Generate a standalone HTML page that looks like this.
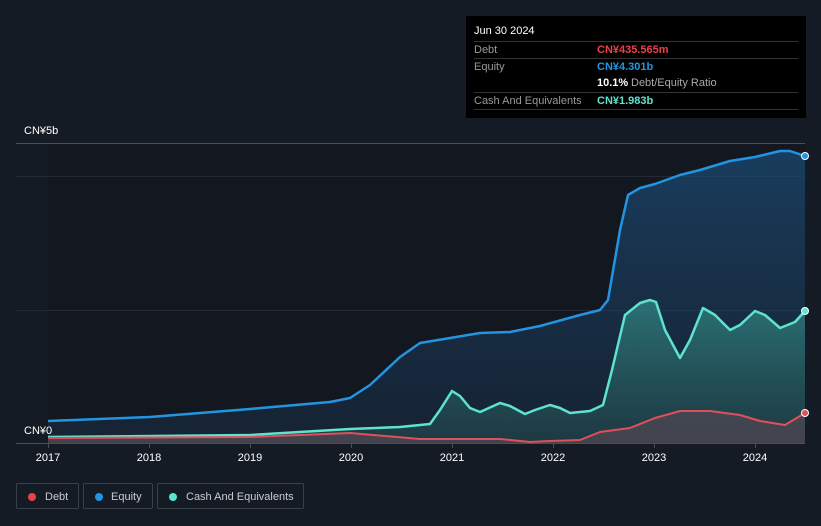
<!DOCTYPE html>
<html><head><meta charset="utf-8"><style>
body{margin:0;width:821px;height:526px;background:#151b25;font-family:"Liberation Sans","Noto Sans CJK SC",sans-serif;overflow:hidden;position:relative;color:#fff}
.tt{position:absolute;left:466px;top:16px;width:340px;height:102px;background:#000;}
.tt .h{position:absolute;left:8px;top:9px;font-size:11px;color:#fff}
.row{position:absolute;left:8px;width:324px;border-top:1px solid #333;font-size:11px;height:17px;line-height:17px}
.row .l{position:absolute;left:0;color:#999}.row .v{position:absolute;left:123px;font-weight:bold}
.ax{position:absolute;font-size:11px;color:#fff}
.leg{position:absolute;top:483px;height:26px;border:1px solid #3a4048;border-radius:2px;font-size:11px;color:#ccc;line-height:26px;box-sizing:border-box}
.leg i{position:absolute;left:11px;top:9px;width:8px;height:8px;border-radius:50%}
</style></head><body>
<svg width="821" height="526" style="position:absolute;left:0;top:0">
<defs>
<linearGradient id="ge" x1="0" y1="0" x2="0" y2="1"><stop offset="0" stop-color="#1b4a73" stop-opacity=".75"/><stop offset="1" stop-color="#1b3550" stop-opacity=".4"/></linearGradient>
<linearGradient id="gc" x1="0" y1="0" x2="0" y2="1"><stop offset="0" stop-color="#3aa89a" stop-opacity=".55"/><stop offset="1" stop-color="#2a5a5a" stop-opacity=".4"/></linearGradient>
</defs>
<rect x="48" y="143" width="757" height="300" fill="#121720"/>
<line x1="16" y1="143.5" x2="805" y2="143.5" stroke="#4a4f57"/>
<line x1="16" y1="176.5" x2="805" y2="176.5" stroke="#262b33"/>
<line x1="16" y1="310.5" x2="805" y2="310.5" stroke="#262b33"/>
<path d="M48,421 L150,417 L250,409 L330,402 L350,398 L370,385 L400,357 L420,343 L450,338 L480,333 L510,332 L540,326 L580,315 L600,310 L608,300 L620,230 L628,195 L640,188 L655,184 L680,175 L700,170 L730,161 L755,157 L780,151 L790,151 L805,156 L805,443 L48,443Z" fill="url(#ge)"/>
<path d="M48,437 L250,435 L300,432 L350,429 L400,427 L430,424 L440,410 L452,391 L460,396 L470,408 L480,412 L500,403 L510,406 L525,414 L535,410 L550,405 L560,408 L570,413 L590,411 L603,405 L612,370 L625,315 L640,303 L650,300 L656,302 L665,330 L680,358 L690,340 L703,308 L715,315 L730,330 L740,325 L755,311 L765,315 L780,328 L795,322 L805,311 L805,443 L48,443Z" fill="url(#gc)"/>
<path d="M48,438 L250,437 L350,433 L420,439 L500,439 L530,442 L550,441 L580,440 L600,432 L630,428 L655,418 L680,411 L710,411 L740,415 L760,421 L785,425 L805,413 L805,443 L48,443Z" fill="#5a4a55" fill-opacity=".6"/>
<path d="M48,421 L150,417 L250,409 L330,402 L350,398 L370,385 L400,357 L420,343 L450,338 L480,333 L510,332 L540,326 L580,315 L600,310 L608,300 L620,230 L628,195 L640,188 L655,184 L680,175 L700,170 L730,161 L755,157 L780,151 L790,151 L805,156" fill="none" stroke="#2394e0" stroke-width="2.5" stroke-linejoin="round"/>
<path d="M48,437 L250,435 L300,432 L350,429 L400,427 L430,424 L440,410 L452,391 L460,396 L470,408 L480,412 L500,403 L510,406 L525,414 L535,410 L550,405 L560,408 L570,413 L590,411 L603,405 L612,370 L625,315 L640,303 L650,300 L656,302 L665,330 L680,358 L690,340 L703,308 L715,315 L730,330 L740,325 L755,311 L765,315 L780,328 L795,322 L805,311" fill="none" stroke="#5ee3cf" stroke-width="2.5" stroke-linejoin="round"/>
<path d="M48,438 L250,437 L350,433 L420,439 L500,439 L530,442 L550,441 L580,440 L600,432 L630,428 L655,418 L680,411 L710,411 L740,415 L760,421 L785,425 L805,413" fill="none" stroke="#e0505a" stroke-width="2" stroke-linejoin="round"/>
<circle cx="805" cy="156" r="3.5" fill="#2394e0" stroke="#fff" stroke-width="1"/>
<circle cx="805" cy="311" r="3.5" fill="#5ee3cf" stroke="#fff" stroke-width="1"/>
<circle cx="805" cy="413" r="3.5" fill="#e0505a" stroke="#fff" stroke-width="1"/>
<line x1="16" y1="443.5" x2="805" y2="443.5" stroke="#4a4f57"/>
<g stroke="#4a4f57"><line x1="48.5" y1="443" x2="48.5" y2="448"/><line x1="149.5" y1="443" x2="149.5" y2="448"/><line x1="250.5" y1="443" x2="250.5" y2="448"/><line x1="351.5" y1="443" x2="351.5" y2="448"/><line x1="452.5" y1="443" x2="452.5" y2="448"/><line x1="553.5" y1="443" x2="553.5" y2="448"/><line x1="654.5" y1="443" x2="654.5" y2="448"/><line x1="755.5" y1="443" x2="755.5" y2="448"/></g>
<g font-size="11" fill="#fff" text-anchor="middle" font-family="Liberation Sans,sans-serif"><text x="48" y="461">2017</text><text x="149" y="461">2018</text><text x="250" y="461">2019</text><text x="351" y="461">2020</text><text x="452" y="461">2021</text><text x="553" y="461">2022</text><text x="654" y="461">2023</text><text x="755" y="461">2024</text></g>
</svg>
<div class="ax" style="left:24px;top:125px">CN¥5b</div>
<div class="ax" style="left:24px;top:425px">CN¥0</div>
<div class="tt"><div class="h">Jun 30 2024</div>
<div class="row" style="top:25px"><span class="l">Debt</span><span class="v" style="color:#e8414a">CN¥435.565m</span></div>
<div class="row" style="top:42px"><span class="l">Equity</span><span class="v" style="color:#2394e0">CN¥4.301b</span></div>
<div class="row" style="top:59px;border-top:none"><span class="v" style="color:#fff">10.1%</span><span style="position:absolute;left:157px;color:#aaa">Debt/Equity Ratio</span></div>
<div class="row" style="top:76px"><span class="l">Cash And Equivalents</span><span class="v" style="color:#5ee3cf">CN¥1.983b</span></div>
<div class="row" style="top:93px;height:0"></div>
</div>
<div class="leg" style="left:16px;width:63px"><i style="background:#e8414a"></i><span style="position:absolute;left:28px">Debt</span></div>
<div class="leg" style="left:83px;width:70px"><i style="background:#2394e0"></i><span style="position:absolute;left:27px">Equity</span></div>
<div class="leg" style="left:157px;width:147px"><i style="background:#5ee3cf"></i><span style="position:absolute;left:28px">Cash And Equivalents</span></div>
</body></html>
